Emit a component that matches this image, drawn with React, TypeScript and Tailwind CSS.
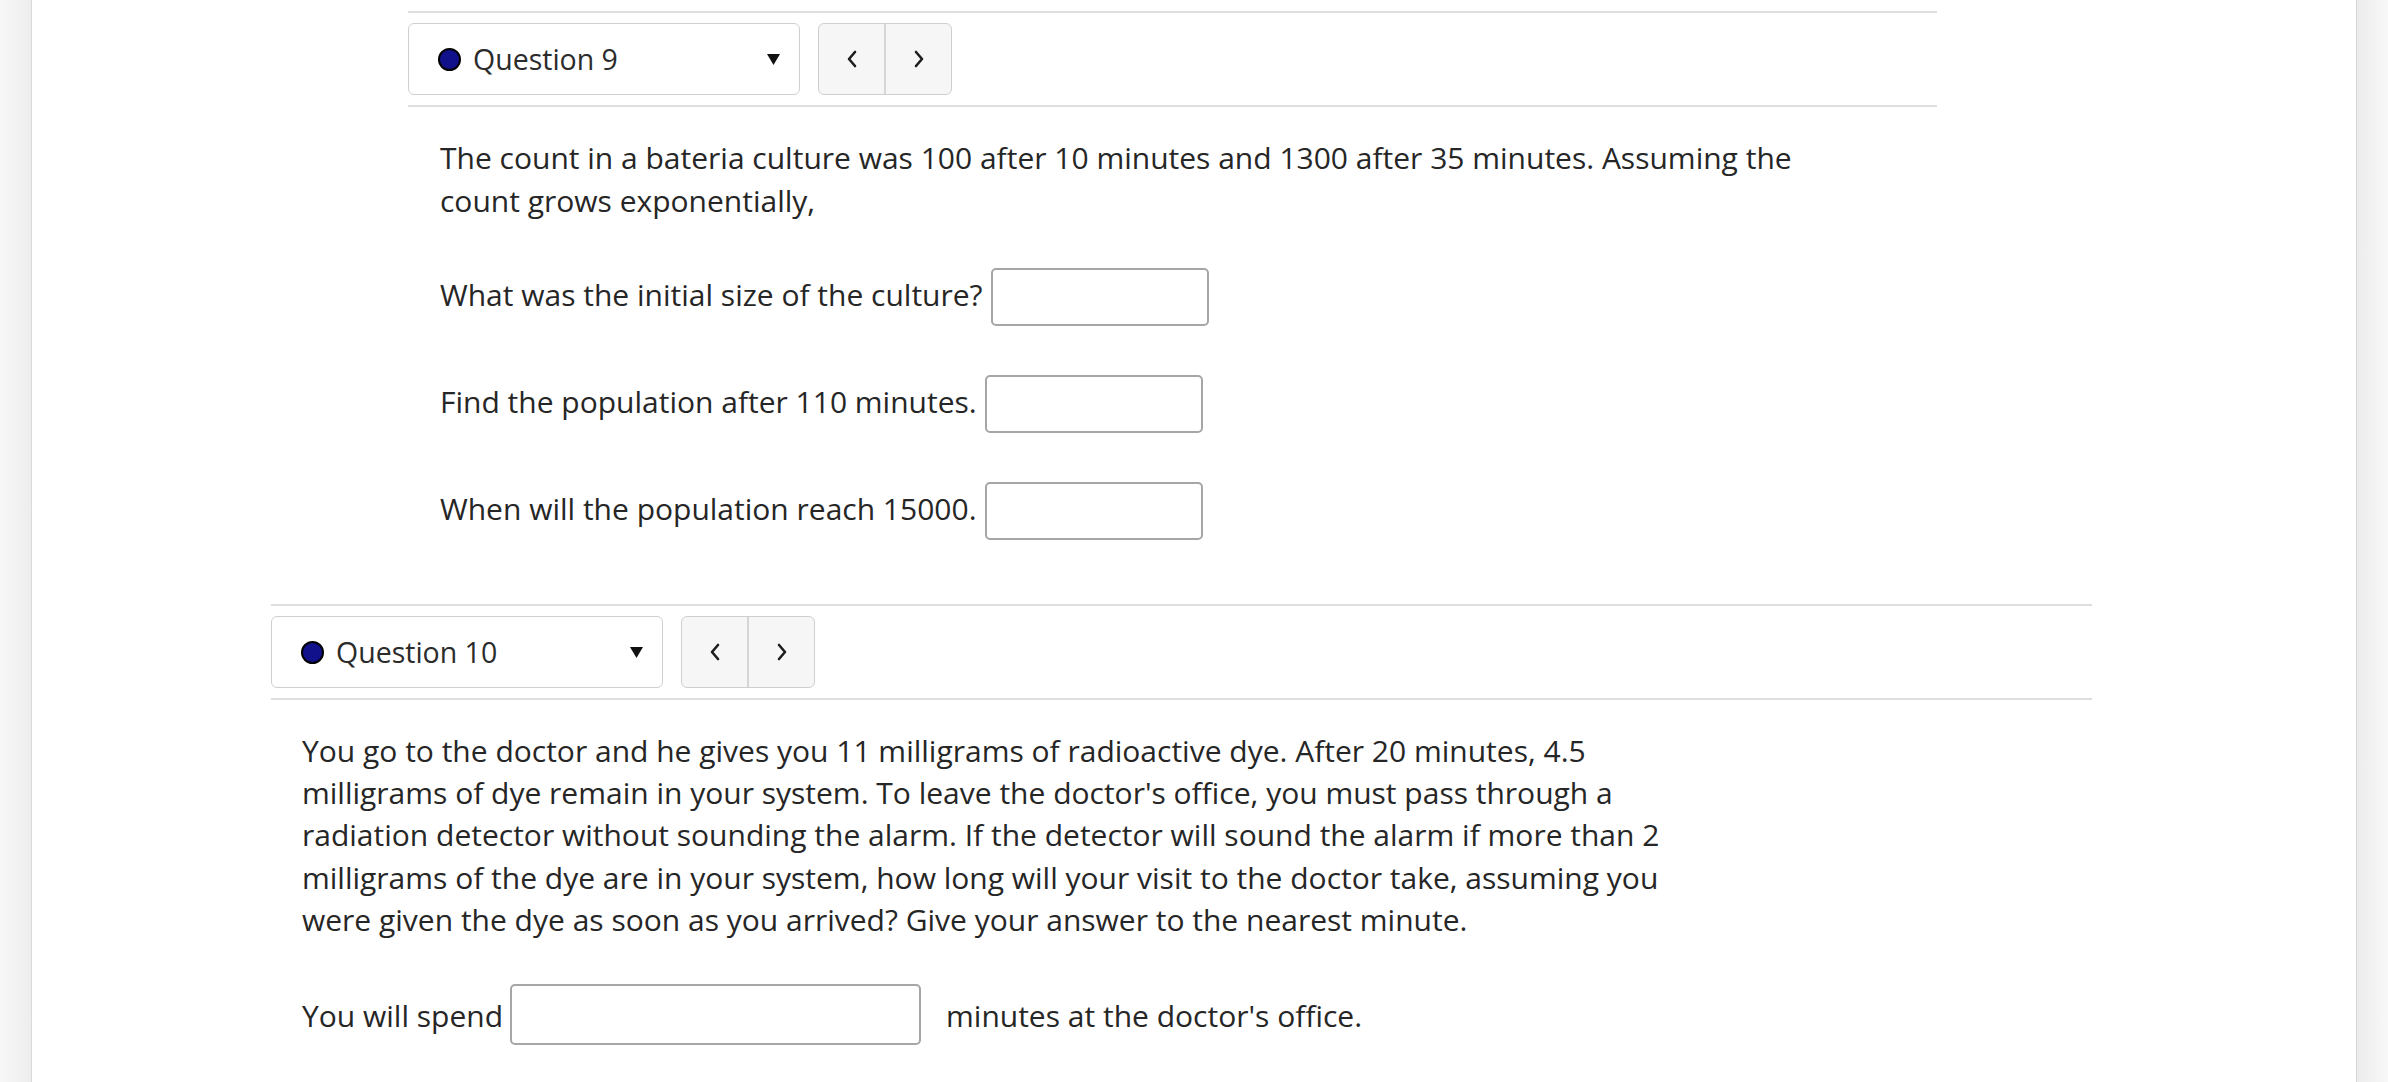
import React from 'react';

const font = { fontFamily: '"Open Sans", "Noto Sans", Arial, sans-serif' };

function Chevron({ dir }: { dir: 'left' | 'right' }) {
  return (
    <svg width="12" height="20" viewBox="0 0 12 20" fill="none">
      <polyline
        points={dir === 'left' ? '9,3 3,10 9,17' : '3,3 9,10 3,17'}
        stroke="#1e1e1e"
        strokeWidth="2.6"
        strokeLinecap="round"
        strokeLinejoin="round"
      />
    </svg>
  );
}

function QuestionNav({ label }: { label: string }) {
  return (
    <div className="flex items-center gap-[18px] border-y-2 border-[#dedede] py-[10px]">
      <div className="flex h-[72px] w-[392px] items-center rounded-[6px] border border-[#cfcfcf] bg-white pl-[29px] pr-[19px]">
        <span className="h-[23px] w-[23px] shrink-0 rounded-full border-2 border-black bg-[#11118c]" />
        <span className="ml-[12px] flex-1 text-[28.5px] text-[#2b2b2b]">{label}</span>
        <svg width="13" height="11" viewBox="0 0 13 11">
          <polygon points="0,0 13,0 6.5,11" fill="#111" />
        </svg>
      </div>
      <div className="flex h-[72px] w-[134px] overflow-hidden rounded-[6px] border border-[#cfcfcf] bg-[#f6f6f6]">
        <button className="flex flex-1 items-center justify-center border-r-2 border-[#d6d6d6]">
          <Chevron dir="left" />
        </button>
        <button className="flex flex-1 items-center justify-center">
          <Chevron dir="right" />
        </button>
      </div>
    </div>
  );
}

function Box({ w, h }: { w: string; h: string }) {
  return <span className={`inline-block ${w} ${h} shrink-0 rounded-[5px] border-2 border-[#a6a6a6] bg-white`} />;
}

export default function App() {
  return (
    <div className="flex h-[1082px] w-full overflow-hidden bg-white text-[#262626]" style={font}>
      <aside className="w-[32px] shrink-0 border-r border-[#dadada] bg-gradient-to-r from-[#f8f8f8] to-[#ededed]" />

      <main className="flex-1 pt-[11px]">
        {/* question 9 */}
        <section className="ml-[376px] w-[1529px]">
          <QuestionNav label="Question 9" />
          <div className="pl-[32px] pt-[30px] text-[30px] leading-[42.5px]">
            <p className="whitespace-nowrap">
              The count in a bateria culture was 100 after 10 minutes and 1300 after 35 minutes. Assuming the
              <br />
              count grows exponentially,
            </p>
            <div className="mt-[46px] flex h-[58px] items-center gap-[8px]">
              <span className="pb-[4px]">What was the initial size of the culture?</span>
              <Box w="w-[218px]" h="h-[58px]" />
            </div>
            <div className="mt-[49px] flex h-[58px] items-center gap-[8px]">
              <span className="pb-[4px]">Find the population after 110 minutes.</span>
              <Box w="w-[218px]" h="h-[58px]" />
            </div>
            <div className="mt-[49px] flex h-[58px] items-center gap-[8px]">
              <span className="pb-[4px]">When will the population reach 15000.</span>
              <Box w="w-[218px]" h="h-[58px]" />
            </div>
          </div>
        </section>

        {/* question 10 */}
        <section className="ml-[239px] mt-[64px] w-[1821px]">
          <QuestionNav label="Question 10" />
          <div className="pl-[31px] pt-[30px] text-[30px] leading-[42.2px]">
            <p className="whitespace-nowrap">
              You go to the doctor and he gives you 11 milligrams of radioactive dye. After 20 minutes, 4.5
              <br />
              milligrams of dye remain in your system. To leave the doctor's office, you must pass through a
              <br />
              radiation detector without sounding the alarm. If the detector will sound the alarm if more than 2
              <br />
              milligrams of the dye are in your system, how long will your visit to the doctor take, assuming you
              <br />
              were given the dye as soon as you arrived? Give your answer to the nearest minute.
            </p>
            <div className="mt-[48px] flex h-[61px] items-center">
              <span className="pb-[6px]">You will spend</span>
              <span className="ml-[7px]">
                <Box w="w-[411px]" h="h-[61px]" />
              </span>
              <span className="ml-[25px] pb-[6px]">minutes at the doctor's office.</span>
            </div>
          </div>
        </section>
      </main>

      <aside className="w-[32px] shrink-0 border-l border-[#d6d6d6] bg-gradient-to-r from-[#ececec] to-[#f8f8f8]" />
    </div>
  );
}
